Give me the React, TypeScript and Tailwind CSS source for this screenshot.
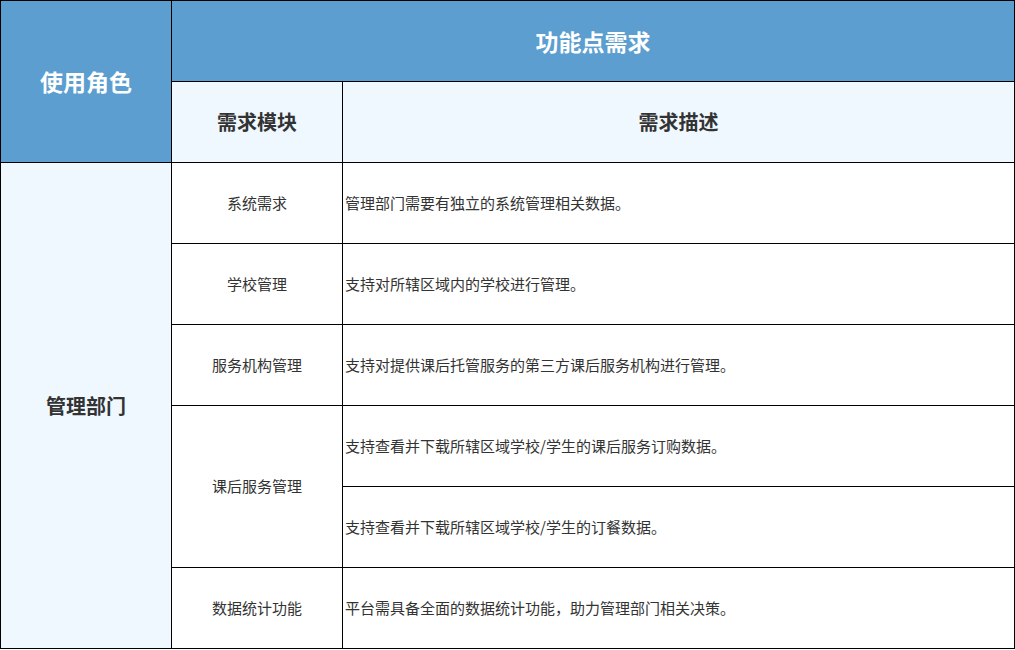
export default function App() {
  const f = { fontFamily: '"Noto Sans CJK SC", "Noto Sans", sans-serif' };
  const cell = "flex items-center justify-center bg-white text-[15px] text-[#333]";
  const desc = "flex items-center bg-white text-[15px] text-[#333] pl-[2px]";
  return (
    <div style={f} className="w-[1015px] h-[650px] bg-white">
      <div className="grid grid-cols-[170px_170px_671px] grid-rows-[repeat(8,80px)] gap-px bg-black p-px w-[1015px]">
        <div className="row-span-2 flex items-center justify-center bg-[#5b9ecf] text-white text-[23px] font-bold">使用角色</div>
        <div className="col-span-2 flex items-center justify-center bg-[#5b9ecf] text-white text-[23px] font-bold">功能点需求</div>
        <div className="flex items-center justify-center bg-[#f0f8ff] text-[#333] text-[20px] font-bold">需求模块</div>
        <div className="flex items-center justify-center bg-[#f0f8ff] text-[#333] text-[20px] font-bold">需求描述</div>
        <div className="row-span-6 flex items-center justify-center bg-[#f0f8ff] text-[#333] text-[20px] font-bold">管理部门</div>
        <div className={cell}>系统需求</div>
        <div className={desc}>管理部门需要有独立的系统管理相关数据。</div>
        <div className={cell}>学校管理</div>
        <div className={desc}>支持对所辖区域内的学校进行管理。</div>
        <div className={cell}>服务机构管理</div>
        <div className={desc}>支持对提供课后托管服务的第三方课后服务机构进行管理。</div>
        <div className={cell + " row-span-2"}>课后服务管理</div>
        <div className={desc}>支持查看并下载所辖区域学校/学生的课后服务订购数据。</div>
        <div className={desc}>支持查看并下载所辖区域学校/学生的订餐数据。</div>
        <div className={cell}>数据统计功能</div>
        <div className={desc}>平台需具备全面的数据统计功能，助力管理部门相关决策。</div>
      </div>
    </div>
  );
}
